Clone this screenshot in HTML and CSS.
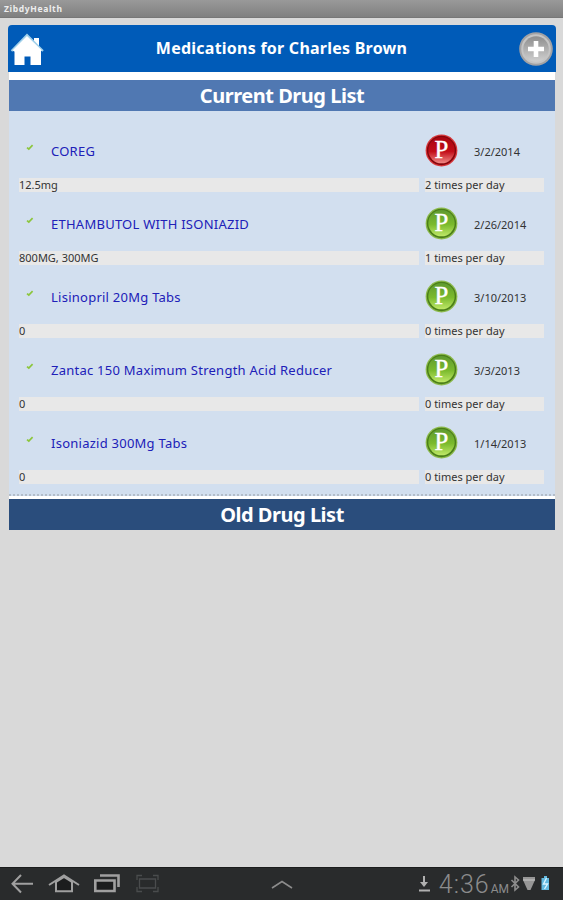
FILE: index.html
```
<!DOCTYPE html>
<html lang="en">
<head>
    <meta charset="UTF-8">
    <meta name="viewport" content="width=device-width, initial-scale=1.0">
    <title>ZibdyHealth</title>
    <link rel="stylesheet" href="styles.css">
</head>
<body>
    <svg width="0" height="0" class="defs">
        <defs>
            <linearGradient id="red" x1="0" y1="0" x2="0" y2="1">
                <stop offset="0" stop-color="#a80510"/>
                <stop offset="0.55" stop-color="#c20d18"/>
                <stop offset="1" stop-color="#f08a86"/>
            </linearGradient>
            <linearGradient id="green" x1="0" y1="0" x2="0" y2="1">
                <stop offset="0" stop-color="#5f9a30"/>
                <stop offset="0.55" stop-color="#7aba2c"/>
                <stop offset="1" stop-color="#bfe868"/>
            </linearGradient>
            <linearGradient id="silver" x1="0" y1="0" x2="0" y2="1">
                <stop offset="0" stop-color="#8e8e8e"/>
                <stop offset="1" stop-color="#cfcfcf"/>
            </linearGradient>
            <symbol id="check" viewBox="0 0 8 7">
                <path d="M1 3.6 L2.8 5 L6.6 1.2" fill="none" stroke="#8cc63c" stroke-width="1.7"/>
            </symbol>
            <symbol id="p-red" viewBox="0 0 32 32">
                <circle cx="16" cy="16" r="15.4" fill="#d8383c"/>
                <circle cx="16" cy="16" r="14.2" fill="#86060c"/>
                <circle cx="16" cy="15.6" r="12.8" fill="url(#red)"/>
                <text x="16" y="23" class="badge-letter">P</text>
            </symbol>
            <symbol id="p-green" viewBox="0 0 32 32">
                <circle cx="16" cy="16" r="15.4" fill="#8cba4c"/>
                <circle cx="16" cy="16" r="14.2" fill="#4b7f18"/>
                <circle cx="16" cy="15.6" r="12.8" fill="url(#green)"/>
                <text x="16" y="23" class="badge-letter">P</text>
            </symbol>
        </defs>
    </svg>

    <div class="status-bar">ZibdyHealth</div>

    <main class="app">
        <header class="title-bar">
            <a href="#" class="home" aria-label="Home">
                <svg width="34" height="36" viewBox="0 0 34 36">
                    <path d="M24 7 H29 V17 L24 12Z" fill="#fff"/>
                    <path d="M17 5 L31 19 V34 H20.500 V25.500 H14.500 V34 H4.500 V18Z" fill="#fff"/>
                    <path d="M1.500 20 L17 4 L33 20" fill="none" stroke="#9fd0ea" stroke-width="2"/>
                    <path d="M3.500 20 L17 6.500 L31 20" fill="none" stroke="#fff" stroke-width="2.2"/>
                </svg>
            </a>
            <h1>Medications for Charles Brown</h1>
            <a href="#" class="add" aria-label="Add">
                <svg width="34" height="34" viewBox="0 0 34 34">
                    <circle cx="17" cy="17" r="16.8" fill="#a2a2a4"/>
                    <circle cx="17" cy="17" r="14.8" fill="#c4c4c4"/>
                    <circle cx="17" cy="17" r="12.8" fill="url(#silver)"/>
                    <path d="M17 9 V25 M9 17 H25" stroke="#fff" stroke-width="4.6"/>
                </svg>
            </a>
        </header>

        <h2 class="section current">Current Drug List</h2>
        <ul class="drugs">
            <li class="drug">
                <div class="drug-head">
                    <svg class="check"><use href="#check"/></svg>
                    <a href="#" class="name">COREG</a>
                    <svg class="badge"><use href="#p-red"/></svg>
                    <span class="date">3/2/2014</span>
                </div>
                <div class="drug-dose"><span>12.5mg</span><span>2 times per day</span></div>
            </li>
            <li class="drug">
                <div class="drug-head">
                    <svg class="check"><use href="#check"/></svg>
                    <a href="#" class="name">ETHAMBUTOL WITH ISONIAZID</a>
                    <svg class="badge"><use href="#p-green"/></svg>
                    <span class="date">2/26/2014</span>
                </div>
                <div class="drug-dose"><span>800MG, 300MG</span><span>1 times per day</span></div>
            </li>
            <li class="drug">
                <div class="drug-head">
                    <svg class="check"><use href="#check"/></svg>
                    <a href="#" class="name">Lisinopril 20Mg Tabs</a>
                    <svg class="badge"><use href="#p-green"/></svg>
                    <span class="date">3/10/2013</span>
                </div>
                <div class="drug-dose"><span>0</span><span>0 times per day</span></div>
            </li>
            <li class="drug">
                <div class="drug-head">
                    <svg class="check"><use href="#check"/></svg>
                    <a href="#" class="name">Zantac 150 Maximum Strength Acid Reducer</a>
                    <svg class="badge"><use href="#p-green"/></svg>
                    <span class="date">3/3/2013</span>
                </div>
                <div class="drug-dose"><span>0</span><span>0 times per day</span></div>
            </li>
            <li class="drug">
                <div class="drug-head">
                    <svg class="check"><use href="#check"/></svg>
                    <a href="#" class="name">Isoniazid 300Mg Tabs</a>
                    <svg class="badge"><use href="#p-green"/></svg>
                    <span class="date">1/14/2013</span>
                </div>
                <div class="drug-dose"><span>0</span><span>0 times per day</span></div>
            </li>
        </ul>
        <h2 class="section old">Old Drug List</h2>
    </main>

    <nav class="nav-bar">
        <svg width="165" height="32" viewBox="0 0 165 32" fill="none" stroke="#a0a0a0" stroke-width="2">
            <path d="M33 15.800 H13 M21 7 L12.500 15.800 L21 24.500"/>
            <path d="M49 17 L64 7.500 L79 17"/>
            <path d="M56 14 V23.300 H72 V14 L64 9Z" fill="#1c1d1e"/>
            <path d="M95.300 12.500 H114.500 V23 H95.300Z" fill="#1c1d1e" stroke-width="2.6"/>
            <path d="M100 7.500 H118.500 V19" stroke-width="2.6"/>
            <path d="M142 7.500 H137 V12 M153 7.500 H158 V12 M142 23.500 H137 V19 M153 23.500 H158 V19 M139.500 11 H155.500 V20 H139.500Z" stroke="#4a4c4d" stroke-width="1.3"/>
        </svg>
        <svg width="22" height="32" viewBox="0 0 22 32" fill="none" stroke="#8c8c8c" stroke-width="1.6">
            <path d="M1 20 L11 13.500 L21 20"/>
        </svg>
        <div class="tray">
            <svg width="14" height="32" viewBox="0 0 14 32" fill="none" stroke="#b0b0b0" stroke-width="2">
                <path d="M7 8 V16 M2 22.500 H13"/>
                <path d="M3 14 H11 L7 19Z" fill="#b0b0b0" stroke="none"/>
            </svg>
            <span class="clock">4:36</span>
            <span class="ampm">AM</span>
            <svg width="42" height="32" viewBox="0 0 42 32" fill="none">
                <path d="M1.500 12 L8.500 19 L5 22 V9 L8.500 12 L1.500 19" stroke="#8c8c8c" stroke-width="1.6"/>
                <path d="M13 9 H25 V12 L20.500 22 H17.500 L13 12Z" fill="#969696"/>
                <path d="M13 12 H25" stroke="#c8c8c8" stroke-width="1"/>
                <path d="M34 8 H37 V10 H39 V22 H31.500 V10 H34Z" fill="#62b9df"/>
                <path d="M36.500 10 L33.500 16 H37.500 L34.500 21" stroke="#d8f3ff" stroke-width="1.4"/>
            </svg>
        </div>
    </nav>
</body>
</html>
```
FILE: styles.css
```
* {
    box-sizing: border-box;
}
body {
    display: flex;
    flex-direction: column;
    height: 900px;
    margin: 0;
    background-color: #d9d9d9;
    font-family: "Noto Sans", "Open Sans", sans-serif;
    overflow: hidden;
}
.defs {
    position: absolute;
}
h1, h2, ul {
    margin: 0;
    padding: 0;
}
a {
    text-decoration: none;
}
.status-bar {
    height: 18px;
    padding-left: 4px;
    background: linear-gradient(#999, #808080);
    border-bottom: 1px solid #777;
    color: #eee;
    font-size: 8.5px;
    font-weight: bold;
    line-height: 18px;
    letter-spacing: 0.65px;
}
.app {
    flex: 1;
    padding: 7px 7px 0 8px;
}
.title-bar {
    display: flex;
    align-items: center;
    justify-content: space-between;
    height: 47px;
    padding: 0 3px 0 2px;
    background-color: #005bb8;
    border-radius: 4px 4px 0 0;
}
.home, .add {
    display: flex;
}
.title-bar h1 {
    color: #fff;
    font-size: 16px;
    line-height: 46px;
    letter-spacing: 0.24px;
    padding-bottom: 1px;
}
.section {
    height: 31px;
    margin: 0 1px;
    color: #fff;
    font-size: 20px;
    line-height: 31px;
    letter-spacing: -0.48px;
    text-align: center;
}
.current {
    margin-top: 8px;
    background-color: #5078b2;
    box-shadow: 0 -8px #fff;
}
.old {
    margin-top: 3px;
    background-color: #2a4d7c;
    box-shadow: 0 -3px #fff;
}
.drugs {
    height: 385px;
    margin: 0 1px;
    padding: 16px 10px 0;
    background-color: #d2dfef;
    border-bottom: 2px dotted #b3bdc9;
    list-style: none;
}
.drug {
    height: 73.1px;
}
.drug-head {
    display: grid;
    grid-template-columns: 32px 374px 49px 1fr;
    align-items: center;
    height: 46px;
}
.check {
    width: 8px;
    height: 7px;
    margin: -5px 0 0 7px;
}
.name {
    padding-top: 2px;
    color: #2020b8;
    font-size: 13px;
    letter-spacing: 0.25px;
}
.badge {
    width: 33px;
    height: 33px;
}
.badge-letter {
    fill: #fff;
    font: 24px "Liberation Serif", serif;
    stroke: #fff;
    stroke-width: 0.4px;
    text-anchor: middle;
}
.date {
    padding-top: 3px;
    color: #333;
    font-size: 11px;
}
.drug-dose {
    display: grid;
    grid-template-columns: 400px 119px;
    column-gap: 6px;
    margin-top: 5px;
    color: #333;
    font-size: 11px;
    line-height: 14px;
}
.drug-dose span {
    height: 14px;
    background-color: #e8e8e8;
}
.nav-bar {
    display: grid;
    grid-template-columns: 1fr 22px 1fr;
    height: 33px;
    background-color: #292b2c;
    border-top: 1px solid #1b1c1d;
}
.tray {
    display: flex;
    justify-content: flex-end;
    align-items: center;
    padding-right: 11px;
    color: #8c8c8c;
    font-family: Roboto, sans-serif;
}
.clock {
    margin-left: 8px;
    font-size: 25px;
    font-weight: 300;
    letter-spacing: 1px;
}
.ampm {
    margin: 9px 1px 0 1px;
    font-size: 12px;
}
```
